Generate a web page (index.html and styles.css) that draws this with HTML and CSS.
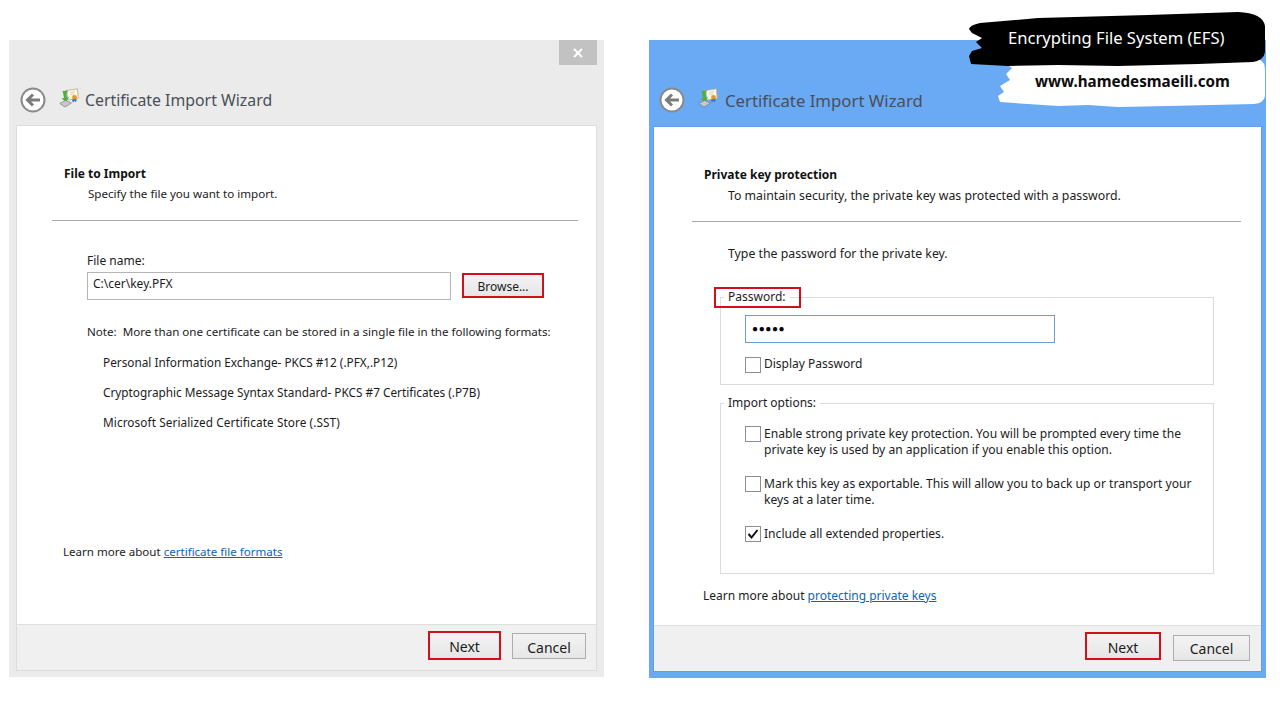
FILE: index.html
```html
<!DOCTYPE html>
<html lang="en">
<head>
<meta charset="utf-8">
<title>Certificate Import Wizard</title>
<link rel="stylesheet" href="styles.css">
</head>
<body>
<svg class="defs" width="0" height="0" aria-hidden="true">
  <defs>
    <symbol id="back" viewBox="0 0 26 26">
      <circle cx="13" cy="13" r="11.5" fill="#fff" stroke="#8a8a8a" stroke-width="2"/>
      <path d="M20 13H8M13 7.5 7.500 13l5.500 5.500" fill="none" stroke="#7c7c7c" stroke-width="3"/>
    </symbol>
    <symbol id="cert" viewBox="0 0 20 20">
      <path d="M7.500 2.500 18.500 .8 19.200 10.500 9 12Z" fill="#fbf8ea" stroke="#b3ab8c" stroke-width=".8"/>
      <path d="M11 4.500l5-.7M11.500 6.500l3.500-.5" stroke="#cfc7a5" stroke-width=".8"/>
      <circle cx="15.500" cy="9.500" r="2.400" fill="#f0951a"/>
      <path d="M13 11.500 13.800 14.500 15.500 13 17.200 14.200 17.500 11Z" fill="#2f78c8"/>
      <path d="M3.500 3 9 2.500 7.500 6 8 10 10.500 8.500 7 14 2.500 10.500 5 10 4.500 7Z" fill="#4fae3f"/>
      <path d="M.8 15.500 6.500 12.500 12.500 15 6 19Z" fill="#c6c9cc" stroke="#7b7e82" stroke-width=".7"/>
    </symbol>
  </defs>
</svg>

<main class="desk">
  <section class="win win-left">
    <div class="titlebar"><span class="close"><svg width="10" height="10" viewBox="0 0 10 10"><path d="M1 1 9 9M9 1 1 9" stroke="#fff" stroke-width="2"/></svg></span></div>
    <header class="head">
      <svg class="back"><use href="#back"/></svg>
      <svg class="cert"><use href="#cert"/></svg>
      <h1 class="title">Certificate Import Wizard</h1>
    </header>
    <div class="panel">
      <div class="body body-left">
        <h2 class="h">File to Import</h2>
        <p class="sub">Specify the file you want to import.</p>
        <hr class="rule">
        <div class="file">
          <label class="flabel">File name:</label>
          <div class="file-row">
            <div class="field">C:\cer\key.PFX</div>
            <button class="btn browse">Browse...</button>
          </div>
        </div>
        <p class="note">Note:&nbsp; More than one certificate can be stored in a single file in the following formats:</p>
        <ul class="formats">
          <li>Personal Information Exchange- PKCS #12 (.PFX,.P12)</li>
          <li>Cryptographic Message Syntax Standard- PKCS #7 Certificates (.P7B)</li>
          <li class="format-last">Microsoft Serialized Certificate Store (.SST)</li>
        </ul>
        <p class="learn learn-left">Learn more about <a href="#">certificate file formats</a></p>
      </div>
      <footer class="foot">
        <button class="btn act next">Next</button>
        <button class="btn act cancel">Cancel</button>
      </footer>
    </div>
  </section>

  <section class="win win-right">
    <div class="titlebar"></div>
    <header class="head">
      <svg class="back"><use href="#back"/></svg>
      <svg class="cert"><use href="#cert"/></svg>
      <h1 class="title">Certificate Import Wizard</h1>
    </header>
    <div class="panel">
      <div class="body body-right">
        <h2 class="h">Private key protection</h2>
        <p class="sub">To maintain security, the private key was protected with a password.</p>
        <hr class="rule">
        <p class="type">Type the password for the private key.</p>
        <fieldset class="group group-pass">
          <legend class="legend legend-mark">Password:</legend>
          <div class="pass">●●●●●</div>
          <div class="check"><span class="box"></span><span>Display Password</span></div>
        </fieldset>
        <fieldset class="group group-opts">
          <legend class="legend">Import options:</legend>
          <div class="check"><span class="box"></span><span>Enable strong private key protection. You will be prompted every time the private key is used by an application if you enable this option.</span></div>
          <div class="check"><span class="box"></span><span>Mark this key as exportable. This will allow you to back up or transport your keys at a later time.</span></div>
          <div class="check"><span class="box"><svg width="14" height="14" viewBox="0 0 14 14"><path d="M2.500 7 5.500 10.500 11.500 3" fill="none" stroke="#111" stroke-width="2"/></svg></span><span>Include all extended properties.</span></div>
        </fieldset>
        <p class="learn learn-right">Learn more about <a href="#">protecting private keys</a></p>
      </div>
      <footer class="foot">
        <button class="btn act next">Next</button>
        <button class="btn act cancel">Cancel</button>
      </footer>
    </div>
  </section>

  <aside class="banner">
    <svg class="brush" width="298" height="100" viewBox="0 0 298 100">
      <path d="M32 48 L292 48 Q297 50 297 58 L297 84 Q296 91 286 92 L200 94 L150 95 L120 93 L90 94 L60 92 L32 90 L30 84 L36 80 L32 74 L42 68 L38 62 L44 56Z" fill="#fff"/>
      <path d="M1 17 Q2 13 12 11 L70 6 L180 3 L270 0 Q295 1 297 14 L297 40 Q296 48 285 50 L230 52 L150 54 L90 53 L40 54 L3 52 L1 44 L4 39 L14 36 L8 30 L14 26 L4 21Z" fill="#000"/>
    </svg>
    <p class="b-one">Encrypting File System (EFS)</p>
    <p class="b-two">www.hamedesmaeili.com</p>
  </aside>
</main>
</body>
</html>
```
FILE: styles.css
```css
* { box-sizing: border-box; }
html, body { margin: 0; padding: 0; background: #fff; }
body { font-family: "Noto Sans", "Open Sans", sans-serif; font-size: 12px; color: #1c1c1c; }
.defs { position: absolute; }

.desk { position: relative; width: 1280px; height: 720px; padding: 40px 0 0 9px; display: flex; gap: 45px; align-items: flex-start; }

.win { display: flex; flex-direction: column; }
.win-left { width: 595px; height: 637px; background: #ebebeb; padding: 0 7px 6px; }
.win-right { width: 617px; height: 638px; background: #6aa9f4; padding: 0 4px 6px; }

.titlebar { height: 25px; display: flex; justify-content: flex-end; }
.close { width: 38px; height: 25px; background: #c2c2c2; display: flex; align-items: center; justify-content: center; }

.head { height: 60px; display: flex; align-items: center; padding-top: 9px; }
.win-left .head { padding-left: 4px; }
.win-right .head { padding-left: 6px; height: 61px; }
.back { width: 26px; height: 26px; flex: none; }
.cert { width: 20px; height: 20px; margin: -4px 0 0 13px; flex: none; }
.title { margin: 0 0 0 5px; font-size: 15.850px; font-weight: 400; color: #4a4f57; }
.win-left .title { margin-left: 6px; }
.win-right .title { margin-left: 7px; font-size: 16.750px; }

.panel { flex: 1; background: #fff; border: 1px solid #dcdcdc; display: flex; flex-direction: column; min-height: 0; }
.win-right .panel { border-color: #5f9fe8; }
.body { flex: 1; position: relative; min-height: 0; }
.body-left { padding: 40px 18px 0 35px; }
.body-right { padding: 40px 20px 0 38px; }

.h { margin: 0; font-size: 12px; line-height: 16px; font-weight: 700; color: #111; padding-left: 12px; }
.sub { margin: 5px 0 0; line-height: 16px; padding-left: 36px; }
.body-left .sub { font-size: 11.600px; margin-top: 4px; }
.body-right .sub { font-size: 12.300px; }
.rule { margin: 17px 0 0; border: 0; border-top: 1px solid #a9a9a9; height: 0; }
.body-left .rule { margin-top: 18px; }

.file { margin: 32px 0 0 35px; }
.flabel { display: block; line-height: 16px; }
.file-row { display: flex; align-items: flex-start; gap: 11px; margin-top: 3px; }
.field { width: 364px; height: 28px; border: 1px solid #b5b5b5; padding: 2px 5px; line-height: 18px; }
.btn { font: inherit; color: #1c1c1c; background: linear-gradient(#f3f3f3, #e6e6e6); border: 1px solid #adadad; padding: 1px 0 0; }
.browse { width: 82px; height: 25px; margin-top: 1px; border: 2px solid #d0101c; }
.note { margin: 24px 0 0 35px; line-height: 16px; font-size: 11.600px; }
.formats { list-style: none; margin: 14px 0 0 51px; padding: 0; display: flex; flex-direction: column; gap: 14px; }
.formats li { line-height: 16px; font-size: 11.800px; }
.formats .format-last { letter-spacing: .08px; }

.learn { margin: 0; line-height: 16px; }
.learn a { color: #0a66b8; }
.learn-left { margin: 114px 0 0 11px; font-size: 11.550px; }
.learn-right { margin: 14px 0 0 11px; }

.foot { height: 46px; background: #f0f0f0; border-top: 1px solid #dfdfdf; display: flex; justify-content: flex-end; align-items: flex-start; padding: 6px 10px 0 0; gap: 11px; }
.act { font-size: 14px; height: 26px; margin-top: 2px; padding-top: 2px; }
.win-left .next { width: 73px; height: 29px; margin-top: 0; border: 2px solid #d0101c; }
.win-left .cancel { width: 74px; }
.win-right .foot { padding: 6px 11px 0 0; gap: 12px; }
.win-right .next { width: 76px; height: 28px; margin-top: 0; border: 2px solid #d0101c; }
.win-right .cancel { width: 77px; margin-top: 3px; padding-top: 1px; }

.type { margin: 24px 0 0 36px; line-height: 16px; font-size: 12.300px; }
.group { margin: 0 0 0 28px; width: 494px; border: 1px solid #dcdcdc; padding: 0 12px 0 24px; min-width: 0; }
.legend { padding: 0 4px; margin-left: -21px; line-height: 16px; }
.legend-mark { position: relative; }
.legend-mark::after { content: ""; position: absolute; top: -2px; bottom: -3px; left: -10px; right: -11px; border: 2px solid #d0101c; }
.group-pass { height: 96px; margin-top: 27px; }
.group-opts { height: 179px; margin-top: 10px; }

.pass { width: 310px; height: 28px; border: 1px solid #6a9fcb; margin-top: 10px; padding-left: 6px; font-size: 10px; line-height: 24px; letter-spacing: .6px; color: #000; }
.check { display: flex; gap: 3px; line-height: 15.500px; }
.group-pass .check { margin-top: 14px; line-height: 14px; }
.group-opts .check { margin-top: 19px; min-height: 31px; font-size: 12.100px; }
.group-opts .check:first-of-type { margin-top: 15px; }
.group-opts .check span:last-child { max-width: 432px; }
.box { flex: none; width: 16px; height: 16px; margin-top: 0; border: 1px solid #8e8e8e; background: #fff; display: flex; align-items: center; justify-content: center; }

.banner { position: absolute; left: 968px; top: 12px; width: 298px; height: 100px; }
.brush { position: absolute; left: 0; top: 0; }
.b-one, .b-two { position: absolute; margin: 0; white-space: nowrap; }
.b-one { left: 40px; top: 15px; font-size: 16.600px; line-height: 22px; color: #fff; }
.b-two { left: 67px; top: 58px; font-size: 15.200px; line-height: 22px; font-weight: 700; color: #0c0c0c; }
```
